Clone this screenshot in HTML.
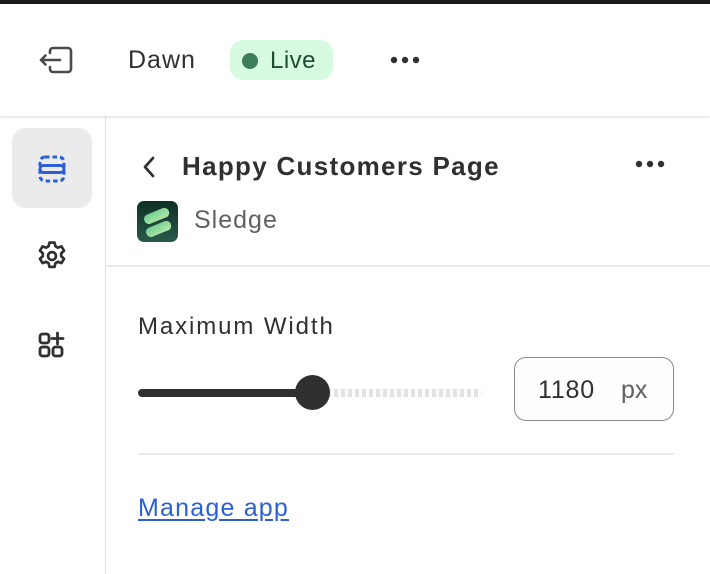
<!DOCTYPE html>
<html><head><meta charset="utf-8"><style>
*{margin:0;padding:0;box-sizing:border-box}
body{width:710px;height:574px;overflow:hidden;background:#fff;font-family:"Liberation Sans",sans-serif;color:#303030;position:relative}
.abs{position:absolute}
</style></head><body>
<div class="abs" style="left:0;top:0;width:710px;height:4px;background:#1a1a1a"></div>
<div class="abs" style="left:0;top:4px;width:710px;height:112px;background:#fff;box-shadow:0 1px 3px rgba(0,0,0,.15);z-index:2"></div>
<svg class="abs" style="left:38px;top:46px;z-index:3" width="36" height="28" viewBox="0 0 36 28"><path d="M12 7 V5 a3 3 0 0 1 3 -3 H30 a3 3 0 0 1 3 3 V23 a3 3 0 0 1 -3 3 H15 a3 3 0 0 1 -3 -3 V21" fill="none" stroke="#4a4a4a" stroke-width="2.6" stroke-linecap="round" stroke-linejoin="round"/><path d="M22 14 H3 M7.5 9.5 L3 14 L7.5 18.5" fill="none" stroke="#4a4a4a" stroke-width="2.6" stroke-linecap="round" stroke-linejoin="round"/></svg>
<div class="abs" style="left:128px;top:46px;font-size:25px;letter-spacing:1px;z-index:3;color:#303030">Dawn</div>
<div class="abs" style="left:230px;top:40px;width:103px;height:40px;border-radius:13px;background:#d6fbe0;z-index:3"></div>
<div class="abs" style="left:242px;top:53px;width:16px;height:16px;border-radius:50%;background:#3e7d5a;z-index:4"></div>
<div class="abs" style="left:270px;top:47px;font-size:24px;letter-spacing:.5px;color:#1f4a33;z-index:4">Live</div>
<svg class="abs" style="left:388px;top:54px;z-index:3" width="34" height="12"><circle cx="6" cy="6" r="3.2" fill="#303030"/><circle cx="17" cy="6" r="3.2" fill="#303030"/><circle cx="28" cy="6" r="3.2" fill="#303030"/></svg>
<div class="abs" style="left:105px;top:116px;width:1px;height:458px;background:#e3e3e3"></div>
<div class="abs" style="left:12px;top:128px;width:80px;height:80px;border-radius:14px;background:#ebebeb"></div>
<svg class="abs" style="left:38px;top:155px" width="28" height="28" viewBox="0 0 28 28"><rect x="2" y="2" width="24" height="24" rx="5" fill="none" stroke="#2c5fd6" stroke-width="3" stroke-dasharray="4.5 3"/><rect x="2" y="10.5" width="24" height="7" rx="3.5" fill="none" stroke="#2c5fd6" stroke-width="3"/></svg>
<svg class="abs" style="left:35px;top:239px" width="34" height="34" viewBox="0 0 24 24"><path d="M10.2 2.5h3.6l.6 2.6 1.8 1 2.5-.9 1.8 3.1-2 1.8v2l2 1.8-1.8 3.1-2.5-.9-1.8 1-.6 2.6h-3.6l-.6-2.6-1.8-1-2.5.9-1.8-3.1 2-1.8v-2l-2-1.8 1.8-3.1 2.5.9 1.8-1z" fill="none" stroke="#303030" stroke-width="1.9" stroke-linejoin="round"/><circle cx="12" cy="12" r="2.8" fill="none" stroke="#303030" stroke-width="1.9"/></svg>
<svg class="abs" style="left:38px;top:331px" width="28" height="28" viewBox="0 0 28 28"><rect x="2" y="3" width="9" height="9" rx="2.5" fill="none" stroke="#303030" stroke-width="2.8"/><rect x="2" y="16" width="9" height="9" rx="2.5" fill="none" stroke="#303030" stroke-width="2.8"/><rect x="15" y="16" width="9" height="9" rx="2.5" fill="none" stroke="#303030" stroke-width="2.8"/><path d="M19.5 2v11M14 7.5h11" stroke="#303030" stroke-width="2.8" stroke-linecap="round"/></svg>
<svg class="abs" style="left:141px;top:156px" width="16" height="22" viewBox="0 0 16 22"><path d="M12 2 L4 11 L12 20" fill="none" stroke="#303030" stroke-width="2.8" stroke-linecap="round" stroke-linejoin="round"/></svg>
<div class="abs" style="left:182px;top:151px;font-size:26px;font-weight:bold;letter-spacing:1.3px;color:#303030">Happy Customers Page</div>
<svg class="abs" style="left:633px;top:158px" width="34" height="12"><circle cx="6" cy="6" r="3.2" fill="#303030"/><circle cx="17" cy="6" r="3.2" fill="#303030"/><circle cx="28" cy="6" r="3.2" fill="#303030"/></svg>
<svg class="abs" style="left:137px;top:201px" width="41" height="41" viewBox="0 0 41 41"><defs><linearGradient id="g" x1="0" y1="0" x2="0" y2="1"><stop offset="0" stop-color="#0f2e25"/><stop offset="1" stop-color="#2a5a4c"/></linearGradient><linearGradient id="h" x1="0" y1="0" x2="1" y2="1"><stop offset="0" stop-color="#4fbf8a"/><stop offset="1" stop-color="#d7f5b0"/></linearGradient></defs><rect width="41" height="41" rx="7" fill="url(#g)"/><path d="M9 14 L26 7 a5 5 0 0 1 4 9 L15 22 a5 5 0 0 1 -6 -8z" fill="url(#h)"/><path d="M11 27 L28 20 a5 5 0 0 1 4 9 L17 35 a5 5 0 0 1 -6 -8z" fill="url(#h)"/></svg>
<div class="abs" style="left:194px;top:206px;font-size:25px;letter-spacing:1px;color:#616161">Sledge</div>
<div class="abs" style="left:106px;top:265px;width:604px;height:2px;background:#ebebeb"></div>
<div class="abs" style="left:138px;top:313px;font-size:24px;letter-spacing:1.9px;color:#303030">Maximum Width</div>
<div class="abs" style="left:138px;top:389px;width:175px;height:8px;border-radius:4px;background:#303030"></div>
<div class="abs" style="left:320px;top:389px;width:162px;height:8px;border-radius:4px;background:repeating-linear-gradient(90deg,#e3e3e3 0 4px,transparent 4px 7px)"></div>
<div class="abs" style="left:295px;top:375px;width:35px;height:35px;border-radius:50%;background:#303030"></div>
<div class="abs" style="left:514px;top:357px;width:160px;height:64px;border:1px solid #8a8a8a;border-radius:12px;background:#fdfdfd"></div>
<div class="abs" style="left:538px;top:376px;font-size:25px;letter-spacing:.8px;color:#303030">1180</div>
<div class="abs" style="left:621px;top:376px;font-size:25px;color:#616161">px</div>
<div class="abs" style="left:138px;top:453px;width:536px;height:2px;background:#ebebeb"></div>
<div class="abs" style="left:138px;top:494px;font-size:25px;letter-spacing:1.2px;color:#2c5fd6;text-decoration:underline;text-underline-offset:3px">Manage app</div>
</body></html>
